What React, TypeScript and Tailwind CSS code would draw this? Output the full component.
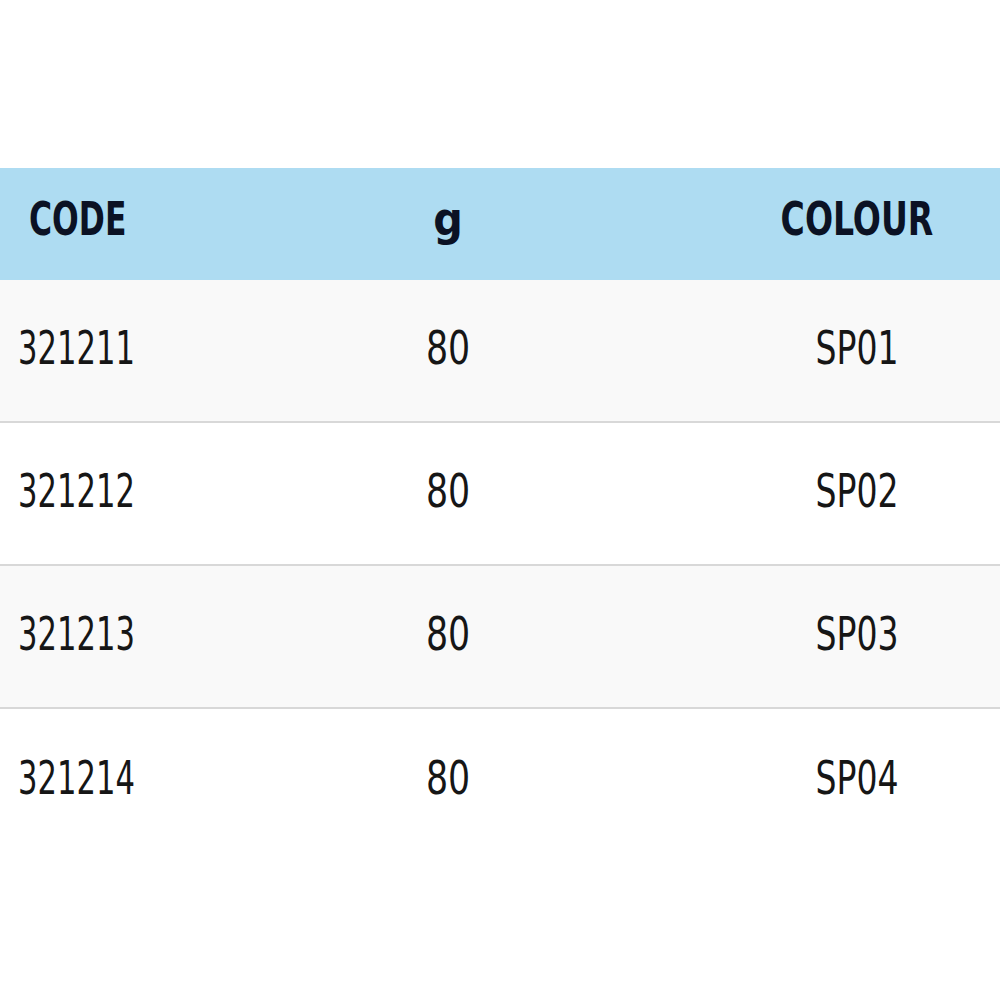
import React from "react";

const rows = [
  { code: "321211", g: "80", colour: "SP01" },
  { code: "321212", g: "80", colour: "SP02" },
  { code: "321213", g: "80", colour: "SP03" },
  { code: "321214", g: "80", colour: "SP04" },
];

const font = {
  fontFamily: '"Liberation Sans Narrow", "DejaVu Sans Condensed", "Liberation Sans", sans-serif',
};

const App = () => {
  return (
    <div className="w-[1000px] h-[1000px] bg-white overflow-hidden" style={font}>
      <div className="h-[168px]" />
      {/* header */}
      <div className="grid grid-cols-[182px_532px_286px] h-[112px] pb-[10px] bg-[#aedcf2] items-center text-[#0b1224] font-bold text-[46px] leading-none">
        <div className="pl-[29px]">
          <span className="inline-block scale-x-[0.76] origin-left">CODE</span>
        </div>
        <div className="text-center">g</div>
        <div className="text-center scale-x-[0.8]">COLOUR</div>
      </div>

      {/* rows */}
      {rows.map((row, idx) => (
        <div
          key={row.code}
          className={`grid grid-cols-[182px_532px_286px] h-[143px] pb-[6px] items-center text-[#161616] text-[46px] leading-none ${
            idx % 2 === 0 ? "bg-[#f9f9f9]" : "bg-white"
          } ${idx < rows.length - 1 ? "border-b-2 border-[#d8d8d8]" : ""}`}
        >
          <div className="pl-[18px]">
            <span className="inline-block scale-x-[0.74] origin-left">{row.code}</span>
          </div>
          <div className="text-center scale-x-[0.84]">{row.g}</div>
          <div className="text-center scale-x-[0.8]">{row.colour}</div>
        </div>
      ))}
    </div>
  );
};

export default App;
